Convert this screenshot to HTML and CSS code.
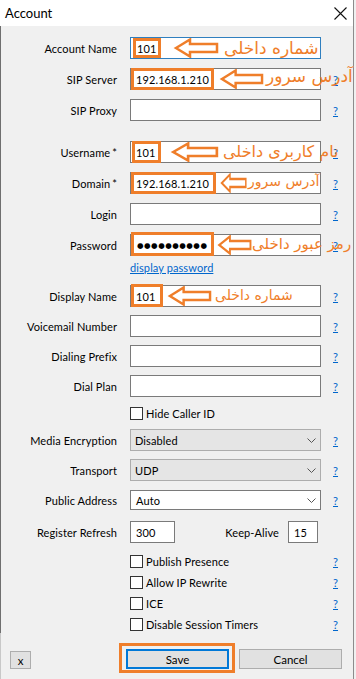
FILE: index.html
```html
<!DOCTYPE html>
<html lang="en">
<head>
    <meta charset="UTF-8">
    <title>Account</title>
    <link rel="stylesheet" href="styles.css">
</head>
<body>
    <div class="window">
        <div class="titlebar">
            <span class="title">Account</span>
            <svg class="close" width="13" height="13" viewBox="0 0 13 13">
                <path d="M0.5 0.5 L12.5 12.5 M12.5 0.5 L0.5 12.5" stroke="#111" stroke-width="1.1" fill="none"/>
            </svg>
        </div>

        <div class="form">
            <div class="group group-server">
                <div class="row">
                    <span class="label">Account Name</span>
                    <div class="field">
                        <div class="edit focused"><span class="caret"></span>101</div>
                        <div class="note note-account">
                            <span class="mark"></span>
                            <svg class="arrow" viewBox="0 0 46 20" preserveAspectRatio="none"><path d="M3 10 L17 1.5 L17 6 L44 6 L44 14 L17 14 L17 18.5 Z"/></svg>
                            <span class="note-text">شماره داخلی</span>
                        </div>
                    </div>
                </div>
                <div class="row">
                    <span class="label">SIP Server</span>
                    <div class="field">
                        <div class="edit">192.168.1.210</div>
                        <div class="note note-server">
                            <span class="mark"></span>
                            <svg class="arrow" viewBox="0 0 46 20" preserveAspectRatio="none"><path d="M3 10 L17 1.5 L17 6 L44 6 L44 14 L17 14 L17 18.5 Z"/></svg>
                            <span class="note-text">آدرس سرور</span>
                        </div>
                    </div>
                    <a class="help">?</a>
                </div>
                <div class="row">
                    <span class="label">SIP Proxy</span>
                    <div class="field"><div class="edit"></div></div>
                    <a class="help">?</a>
                </div>
            </div>

            <div class="group group-user">
                <div class="row">
                    <span class="label">Username<b class="req">*</b></span>
                    <div class="field">
                        <div class="edit">101</div>
                        <div class="note note-user">
                            <span class="mark"></span>
                            <svg class="arrow" viewBox="0 0 46 20" preserveAspectRatio="none"><path d="M3 10 L17 1.5 L17 6 L44 6 L44 14 L17 14 L17 18.5 Z"/></svg>
                            <span class="note-text">نام کاربری داخلی</span>
                        </div>
                    </div>
                    <a class="help">?</a>
                </div>
                <div class="row">
                    <span class="label">Domain<b class="req">*</b></span>
                    <div class="field">
                        <div class="edit">192.168.1.210</div>
                        <div class="note note-domain">
                            <span class="mark"></span>
                            <svg class="arrow" viewBox="0 0 46 20" preserveAspectRatio="none"><path d="M3 10 L17 1.5 L17 6 L44 6 L44 14 L17 14 L17 18.5 Z"/></svg>
                            <span class="note-text">آدرس سرور</span>
                        </div>
                    </div>
                    <a class="help">?</a>
                </div>
                <div class="row">
                    <span class="label">Login</span>
                    <div class="field"><div class="edit"></div></div>
                    <a class="help">?</a>
                </div>
                <div class="row">
                    <span class="label">Password</span>
                    <div class="field">
                        <div class="edit dots">●●●●●●●●●●</div>
                        <div class="note note-pass">
                            <span class="mark"></span>
                            <svg class="arrow" viewBox="0 0 46 20" preserveAspectRatio="none"><path d="M3 10 L17 1.5 L17 6 L44 6 L44 14 L17 14 L17 18.5 Z"/></svg>
                            <span class="note-text">رمز عبور داخلی</span>
                        </div>
                    </div>
                    <a class="help">?</a>
                </div>
                <div class="row link-row">
                    <span class="label"></span>
                    <a class="link">display password</a>
                </div>
            </div>

            <div class="group group-misc">
                <div class="row">
                    <span class="label">Display Name</span>
                    <div class="field">
                        <div class="edit">101</div>
                        <div class="note note-display">
                            <span class="mark"></span>
                            <svg class="arrow" viewBox="0 0 46 20" preserveAspectRatio="none"><path d="M3 10 L17 1.5 L17 6 L44 6 L44 14 L17 14 L17 18.5 Z"/></svg>
                            <span class="note-text">شماره داخلی</span>
                        </div>
                    </div>
                    <a class="help">?</a>
                </div>
                <div class="row">
                    <span class="label">Voicemail Number</span>
                    <div class="field"><div class="edit"></div></div>
                    <a class="help">?</a>
                </div>
                <div class="row">
                    <span class="label">Dialing Prefix</span>
                    <div class="field"><div class="edit"></div></div>
                    <a class="help">?</a>
                </div>
                <div class="row">
                    <span class="label">Dial Plan</span>
                    <div class="field"><div class="edit"></div></div>
                    <a class="help">?</a>
                </div>
                <div class="row check-row">
                    <span class="label"></span>
                    <label class="check"><span class="box"></span>Hide Caller ID</label>
                </div>
                <div class="row">
                    <span class="label">Media Encryption</span>
                    <div class="field">
                        <div class="combo">Disabled<svg class="chevron" width="9" height="5" viewBox="0 0 9 5"><path d="M0.5 0.5 L4.5 4.5 L8.5 0.5" stroke="#555" fill="none"/></svg></div>
                    </div>
                    <a class="help">?</a>
                </div>
                <div class="row">
                    <span class="label">Transport</span>
                    <div class="field">
                        <div class="combo">UDP<svg class="chevron" width="9" height="5" viewBox="0 0 9 5"><path d="M0.5 0.5 L4.5 4.5 L8.5 0.5" stroke="#555" fill="none"/></svg></div>
                    </div>
                    <a class="help">?</a>
                </div>
                <div class="row">
                    <span class="label">Public Address</span>
                    <div class="field">
                        <div class="combo editable">Auto<svg class="chevron" width="9" height="5" viewBox="0 0 9 5"><path d="M0.5 0.5 L4.5 4.5 L8.5 0.5" stroke="#555" fill="none"/></svg></div>
                    </div>
                    <a class="help">?</a>
                </div>
                <div class="row refresh-row">
                    <span class="label">Register Refresh</span>
                    <div class="field inline">
                        <div class="edit short">300</div>
                        <span class="keep-label">Keep-Alive</span>
                        <div class="edit tiny">15</div>
                    </div>
                </div>
            </div>

            <div class="group group-checks">
                <div class="row check-row">
                    <span class="label"></span>
                    <label class="check"><span class="box"></span>Publish Presence</label>
                    <a class="help">?</a>
                </div>
                <div class="row check-row">
                    <span class="label"></span>
                    <label class="check"><span class="box"></span>Allow IP Rewrite</label>
                    <a class="help">?</a>
                </div>
                <div class="row check-row">
                    <span class="label"></span>
                    <label class="check"><span class="box"></span>ICE</label>
                    <a class="help">?</a>
                </div>
                <div class="row check-row">
                    <span class="label"></span>
                    <label class="check"><span class="box"></span>Disable Session Timers</label>
                    <a class="help">?</a>
                </div>
            </div>
        </div>

        <div class="footer">
            <button class="btn btn-x">x</button>
            <div class="actions">
                <button class="btn btn-save">Save</button>
                <button class="btn">Cancel</button>
            </div>
        </div>
    </div>
</body>
</html>
```

FILE: styles.css
```css
* {
    margin: 0;
    padding: 0;
    box-sizing: border-box;
}

body {
    width: 356px;
    height: 679px;
    overflow: hidden;
    background: #f0f0f0;
    font-family: "Segoe UI", Lato, "Noto Sans", sans-serif;
    font-size: 11px;
    letter-spacing: 0.1px;
    color: #000;
}

.window {
    width: 354px;
    height: 679px;
    border-right: 1px solid #8c8c8c;
    display: flex;
    flex-direction: column;
}

.titlebar {
    height: 26px;
    background: #fff;
    display: flex;
    align-items: center;
    justify-content: space-between;
    padding: 0 6px 0 5px;
}

.title {
    font-size: 13px;
    letter-spacing: 0;
}

.form {
    height: 607px;
    border-left: 1px solid #6f6f6f;
    padding-top: 11px;
}

.group {
    display: flex;
    flex-direction: column;
    gap: 9px;
}

.group-user {
    margin-top: 20px;
}

.group-misc {
    margin-top: 9px;
    gap: 8px;
}

.group-checks {
    margin-top: 10px;
    gap: 5px;
}

.row {
    display: flex;
    align-items: center;
    height: 22px;
}

.label {
    flex: none;
    width: 129px;
    padding-right: 13px;
    text-align: right;
    white-space: nowrap;
}

.req {
    font-weight: normal;
    margin-left: 2px;
}

.field {
    position: relative;
    flex: none;
    width: 191px;
    height: 22px;
}

.edit {
    height: 22px;
    background: #fff;
    border: 1px solid #7a7a7a;
    padding: 0 5px;
    display: flex;
    align-items: center;
    white-space: nowrap;
}

.edit.focused {
    border-color: #2f7fbf;
    padding-left: 3px;
}

.caret {
    width: 1px;
    height: 14px;
    background: #000;
    margin-right: 2px;
}

.edit.dots {
    font-family: "DejaVu Sans", sans-serif;
    font-size: 7.5px;
    letter-spacing: 0.5px;
    padding-left: 6px;
}

.help {
    margin-left: 12px;
    color: #0066cc;
    text-decoration: underline;
}

.link-row {
    height: 17px;
    margin-top: -6px;
}

.link {
    color: #0066cc;
    text-decoration: underline;
}

.check-row {
    height: 16px;
}

.check {
    flex: none;
    width: 191px;
    display: flex;
    align-items: center;
    gap: 3px;
}

.box {
    width: 13px;
    height: 13px;
    background: #fff;
    border: 1px solid #333;
}

.combo {
    position: relative;
    height: 22px;
    background: #e5e5e5;
    border: 1px solid #adadad;
    padding: 0 4px;
    display: flex;
    align-items: center;
}

.combo.editable {
    background: #fff;
    border-color: #7a7a7a;
    height: 20px;
    margin-top: 1px;
    padding-left: 5px;
}

.chevron {
    position: absolute;
    right: 4px;
    top: 8px;
}

.combo.editable .chevron {
    top: 7px;
}

.refresh-row {
    margin-top: 2px;
}

.field.inline {
    display: flex;
    align-items: center;
    width: 200px;
}

.edit.short {
    width: 45px;
}

.keep-label {
    width: 104px;
    text-align: right;
    white-space: nowrap;
}

.edit.tiny {
    width: 30px;
    margin-left: 9px;
}

/* orange annotations drawn over the form */
.note {
    position: absolute;
    top: 0;
    left: 1px;
    height: 22px;
    display: flex;
    align-items: center;
    color: #ef7e2a;
    pointer-events: none;
    letter-spacing: 0;
}

.mark {
    height: 22px;
    border: 3px solid #ef7e2a;
}

.arrow {
    height: 20px;
    fill: none;
    stroke: #ef7e2a;
    stroke-width: 2.5;
}

.note-text {
    direction: rtl;
    white-space: nowrap;
    font-family: "DejaVu Sans", sans-serif;
    font-size: 17px;
    line-height: 22px;
}

.note-account .mark { width: 28px; margin-left: 2px; height: 20px; }
.note-account .arrow { width: 46px; margin-left: 12px; }
.note-account .note-text { margin-left: 5px; }

.note-server .mark { width: 83px; }
.note-server .arrow { width: 45px; margin-left: 5px; }
.note-server .note-text { margin-left: 2px; margin-top: -6px; }

.note-user .mark { width: 29px; margin-left: 1px; }
.note-user .arrow { width: 49px; margin-left: 9px; }
.note-user .note-text { margin-left: 4px; font-size: 16px; }

.note-domain .mark { width: 85px; }
.note-domain .arrow { width: 27px; margin-left: 4px; }
.note-domain .note-text { margin-left: 1px; font-size: 14px; margin-top: -4px; }

.note-pass .mark { width: 83px; margin-top: -3px; height: 24px; }
.note-pass .arrow { width: 35px; margin-left: 3px; }
.note-pass .note-text { margin-left: 0; margin-top: -2px; font-size: 15px; }

.note-display .mark { width: 32px; height: 23px; margin-top: -1px; }
.note-display .arrow { width: 45px; margin-left: 4px; }
.note-display .note-text { margin-left: 3px; font-size: 14px; margin-top: -2px; }

.footer {
    flex: 1;
    border-left: 1px solid #c8c8c8;
    display: flex;
    align-items: flex-start;
    justify-content: space-between;
    padding: 16px 11px 0 9px;
}

.btn {
    height: 20px;
    width: 103px;
    background: #e1e1e1;
    border: 1px solid #adadad;
    font-family: "Segoe UI", Lato, "Noto Sans", sans-serif;
    font-size: 11.5px;
    color: #000;
}

.btn-x {
    width: 21px;
    height: 18px;
    margin-top: 2px;
}

.actions {
    display: flex;
    gap: 10px;
}

.btn-save {
    position: relative;
    border: 2px solid #0078d7;
}

.btn-save::after {
    content: "";
    position: absolute;
    top: -8px;
    bottom: -6px;
    left: -9px;
    right: -8px;
    border: 3px solid #ef7e2a;
}
```
